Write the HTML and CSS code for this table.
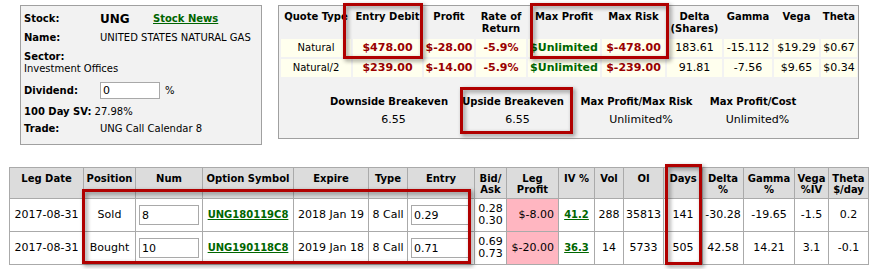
FILE: index.html
```html
<!DOCTYPE html>
<html>
<head>
<meta charset="utf-8">
<link rel="stylesheet" href="styles.css">
</head>
<body>
<div class="page">
  <div class="top">
    <div class="stock-panel">
      <div class="row r-stock"><span class="lbl">Stock:</span><span class="sym">UNG</span><a class="news" href="#">Stock News</a></div>
      <div class="row r-name"><span class="lbl">Name:</span><span>UNITED STATES NATURAL GAS</span></div>
      <div class="r-sector"><b>Sector:</b><br>Investment Offices</div>
      <div class="row r-div"><span class="lbl">Dividend:</span><input class="div-input" value="0"><span class="pct">%</span></div>
      <div class="row r-sv"><b>100 Day SV:</b><span class="sv-val">27.98%</span></div>
      <div class="row r-trade"><span class="lbl">Trade:</span><span>UNG Call Calendar 8</span></div>
    </div>
    <div class="quote-panel">
      <div class="quote-grid">
        <div class="qh">Quote Type</div>
        <div class="qh">Entry Debit</div>
        <div class="qh">Profit</div>
        <div class="qh">Rate of<br>Return</div>
        <div class="qh">Max Profit</div>
        <div class="qh">Max Risk</div>
        <div class="qh">Delta<br>(Shares)</div>
        <div class="qh">Gamma</div>
        <div class="qh">Vega</div>
        <div class="qh">Theta</div>

        <div class="qc lbl-c">Natural</div>
        <div class="qc red">$478.00</div>
        <div class="qc red">$-28.00</div>
        <div class="qc red">-5.9%</div>
        <div class="qc green">$Unlimited</div>
        <div class="qc red">$-478.00</div>
        <div class="qc">183.61</div>
        <div class="qc">-15.112</div>
        <div class="qc">$19.29</div>
        <div class="qc">$0.67</div>

        <div class="qc lbl-c">Natural/2</div>
        <div class="qc red">$239.00</div>
        <div class="qc red">$-14.00</div>
        <div class="qc red">-5.9%</div>
        <div class="qc green">$Unlimited</div>
        <div class="qc red">$-239.00</div>
        <div class="qc">91.81</div>
        <div class="qc">-7.56</div>
        <div class="qc">$9.65</div>
        <div class="qc">$0.34</div>
      </div>
      <div class="be-grid">
        <div class="beh">Downside Breakeven</div>
        <div class="beh">Upside Breakeven</div>
        <div class="beh">Max Profit/Max Risk</div>
        <div class="beh">Max Profit/Cost</div>
        <div class="bev">6.55</div>
        <div class="bev">6.55</div>
        <div class="bev">Unlimited%</div>
        <div class="bev">Unlimited%</div>
      </div>
    </div>
  </div>

  <table class="legs">
    <colgroup>
      <col class="w74"><col class="w52"><col class="w67"><col class="w91"><col class="w75"><col class="w39"><col class="w67"><col class="w32"><col class="w52"><col class="w36"><col class="w29"><col class="w40"><col class="w39"><col class="w41"><col class="w51"><col class="w34"><col class="w40">
    </colgroup>
    <thead>
      <tr>
        <th>Leg Date</th><th>Position</th><th>Num</th><th>Option Symbol</th><th>Expire</th><th>Type</th><th>Entry</th><th>Bid/<br>Ask</th><th>Leg<br>Profit</th><th>IV %</th><th>Vol</th><th>OI</th><th>Days</th><th>Delta<br>%</th><th>Gamma<br>%</th><th>Vega<br>%IV</th><th>Theta<br>$/day</th>
      </tr>
    </thead>
    <tbody>
      <tr>
        <td>2017-08-31</td><td>Sold</td><td class="in-cell"><input class="leg-input" value="8"></td><td><a class="link" href="#">UNG180119C8</a></td><td>2018 Jan 19</td><td>8 Call</td><td class="in-cell"><input class="leg-input" value="0.29"></td><td class="ba">0.28<br>0.30</td><td class="loss">$-8.00</td><td><a class="link" href="#">41.2</a></td><td>288</td><td>35813</td><td>141</td><td>-30.28</td><td>-19.65</td><td>-1.5</td><td>0.2</td>
      </tr>
      <tr>
        <td>2017-08-31</td><td>Bought</td><td class="in-cell"><input class="leg-input" value="10"></td><td><a class="link" href="#">UNG190118C8</a></td><td>2019 Jan 18</td><td>8 Call</td><td class="in-cell"><input class="leg-input" value="0.71"></td><td class="ba">0.69<br>0.73</td><td class="loss">$-20.00</td><td><a class="link" href="#">36.3</a></td><td>14</td><td>5733</td><td>505</td><td>42.58</td><td>14.21</td><td>3.1</td><td>-0.1</td>
      </tr>
    </tbody>
  </table>

  <div class="mark m-entry"></div>
  <div class="mark m-max"></div>
  <div class="mark m-upside"></div>
  <div class="mark m-legs"></div>
  <div class="mark m-days"></div>
</div>
</body>
</html>
```

FILE: styles.css
```css
* { box-sizing: border-box; }

body {
  margin: 0;
  font-family: "DejaVu Sans", Verdana, sans-serif;
  font-size: 11px;
  color: #000;
  background: #fff;
}

.page {
  position: relative;
  width: 874px;
  height: 269px;
  padding-top: 5px;
  overflow: hidden;
}

.top {
  display: flex;
  align-items: flex-start;
  gap: 16px;
  padding-left: 20px;
}

/* ---------- stock panel ---------- */
.stock-panel {
  width: 242px;
  height: 140px;
  border: 1px solid #a0a0a0;
  background: #f2f2f2;
  padding: 6px 0 0 3px;
  font-size: 10px;
}

.row {
  display: flex;
  align-items: center;
  height: 12px;
  line-height: 12px;
  white-space: nowrap;
}

.r-stock {
  height: 14px;
  line-height: 14px;
}

.lbl {
  display: inline-block;
  width: 76px;
  font-weight: bold;
}

.sym {
  display: inline-block;
  width: 53px;
  font-size: 12px;
  font-weight: bold;
}

.news {
  color: #006400;
  font-weight: bold;
  text-decoration: underline;
}

.r-name {
  margin-top: 6px;
}

.r-sector {
  margin-top: 7px;
  line-height: 12px;
}

.r-div {
  margin-top: 6px;
  height: 19px;
}

.div-input {
  width: 60px;
  height: 17px;
  border: 1px solid #a9a9a9;
  background: #fff;
  font-family: "DejaVu Sans", Verdana, sans-serif;
  font-size: 11px;
  padding: 0 2px;
  margin: 0;
}

.pct {
  margin-left: 5px;
}

.r-sv {
  margin-top: 6px;
}

.sv-val {
  margin-left: 3px;
}

.r-trade {
  margin-top: 5px;
}

/* ---------- quote panel ---------- */
.quote-panel {
  width: 581px;
  height: 134px;
  border: 1px solid #a0a0a0;
  background: #f2f2f2;
  padding-left: 2px;
}

.quote-grid {
  display: grid;
  grid-template-columns: 70px 69px 50px 50px 72px 63px 55px 48px 45px 36px;
  grid-template-rows: 31px 18px 18px;
  gap: 2px;
}

.qh {
  font-size: 10px;
  font-weight: bold;
  line-height: 12px;
  text-align: center;
  padding-top: 5px;
  white-space: nowrap;
}

.qc {
  background: #ffffee;
  text-align: center;
  line-height: 18px;
  font-size: 11px;
  white-space: nowrap;
}

.qc.lbl-c {
  font-size: 10px;
}

.qc.red {
  color: #990000;
  font-weight: bold;
}

.qc.green {
  color: #006600;
  font-weight: bold;
}

.be-grid {
  display: grid;
  grid-template-columns: 132px 116px 131px 102px;
  margin: 19px 0 0 42px;
}

.beh {
  font-size: 10px;
  font-weight: bold;
  line-height: 12px;
  text-align: center;
  white-space: nowrap;
}

.bev {
  font-size: 11px;
  line-height: 12px;
  text-align: center;
  padding: 6px 0 0 9px;
}

/* ---------- legs table ---------- */
.legs {
  margin: 22px 0 0 9px;
  border-collapse: collapse;
  table-layout: fixed;
  width: 860px;
}

.w74 { width: 74px; }
.w52 { width: 52px; }
.w67 { width: 67px; }
.w91 { width: 91px; }
.w75 { width: 75px; }
.w39 { width: 39px; }
.w32 { width: 32px; }
.w36 { width: 36px; }
.w29 { width: 29px; }
.w40 { width: 40px; }
.w41 { width: 41px; }
.w51 { width: 51px; }
.w34 { width: 34px; }

.legs th,
.legs td {
  border: 1px solid #aaa;
  padding: 0 2px;
  text-align: center;
  white-space: nowrap;
}

.legs th {
  background: #dcdcdc;
  font-size: 10px;
  font-weight: bold;
  line-height: 11px;
  vertical-align: top;
  padding-top: 5px;
  height: 31px;
}

.legs td {
  height: 33px;
  font-size: 11px;
  line-height: 12px;
  vertical-align: middle;
  background: #fff;
}

.legs td.in-cell {
  text-align: left;
  padding-left: 3px;
}

.leg-input {
  width: 60px;
  height: 20px;
  border: 1px solid #a9a9a9;
  background: #fff;
  font-family: "DejaVu Sans", Verdana, sans-serif;
  font-size: 11px;
  padding: 0 2px;
  margin: 0;
  display: block;
}

.legs td.loss {
  background: #ffb6c1;
  text-align: right;
  padding-right: 4px;
}

.link {
  color: #006600;
  font-weight: bold;
  font-size: 10px;
  text-decoration: underline;
}

/* ---------- annotation boxes ---------- */
.mark {
  position: absolute;
  border: 3px solid #b00000;
  filter: drop-shadow(2px 2px 2px rgba(0, 0, 0, 0.45));
}

.m-entry  { left: 343px; top: 3px;   width: 80px;  height: 56px; }
.m-max    { left: 530px; top: 3px;   width: 139px; height: 56px; }
.m-upside { left: 460px; top: 87px;  width: 113px; height: 47px; }
.m-legs   { left: 82px;  top: 189px; width: 389px; height: 75px; }
.m-days   { left: 665px; top: 164px; width: 37px;  height: 101px; }
```
